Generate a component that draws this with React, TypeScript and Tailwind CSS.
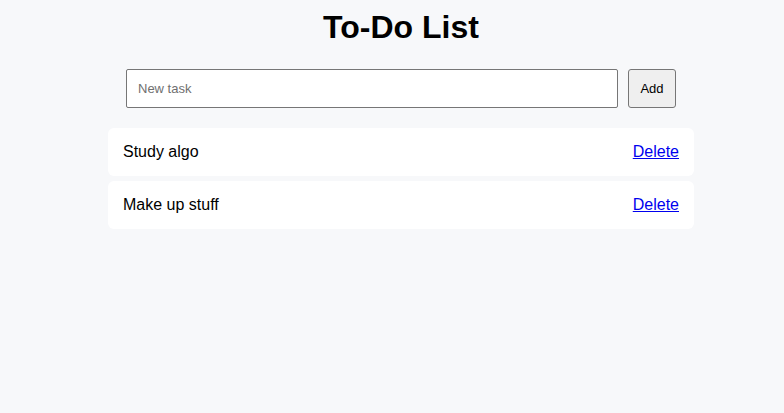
import { useState } from "react";

export default function App() {
  const [tasks, setTasks] = useState<string[]>(["Study algo", "Make up stuff"]);
  const [text, setText] = useState("");

  const add = () => {
    if (!text.trim()) return;
    setTasks([...tasks, text.trim()]);
    setText("");
  };

  return (
    <div
      className="min-h-screen bg-[#f7f8fa] text-black"
      style={{ fontFamily: '"Liberation Sans", Arial, sans-serif' }}
    >
      <div className="ml-[108px] w-[586px] pt-[9px]">
        <h1 className="text-center text-[32px] font-bold leading-[37px]">To-Do List</h1>

        <div className="mt-[23px] flex items-stretch gap-[10px] px-[18px]">
          <input
            value={text}
            onChange={(e) => setText(e.target.value)}
            placeholder="New task"
            className="h-[39px] flex-1 rounded-[2px] border border-[#767676] bg-white px-[11px] text-[13px] placeholder:text-[#6f6f6f] outline-none"
          />
          <button
            onClick={add}
            className="h-[39px] w-[48px] rounded-[3px] border border-[#767676] bg-[#efefef] text-[13px]"
          >
            Add
          </button>
        </div>

        <ul className="mt-[20px] flex flex-col gap-[5px]">
          {tasks.map((t, i) => (
            <li
              key={i}
              className="flex items-center justify-between rounded-[6px] bg-white px-[15px] py-3 text-base leading-6"
            >
              <span>{t}</span>
              <a
                href="#"
                onClick={(e) => {
                  e.preventDefault();
                  setTasks(tasks.filter((_, j) => j !== i));
                }}
                className="text-[#0000ee] underline"
              >
                Delete
              </a>
            </li>
          ))}
        </ul>
      </div>
    </div>
  );
}
